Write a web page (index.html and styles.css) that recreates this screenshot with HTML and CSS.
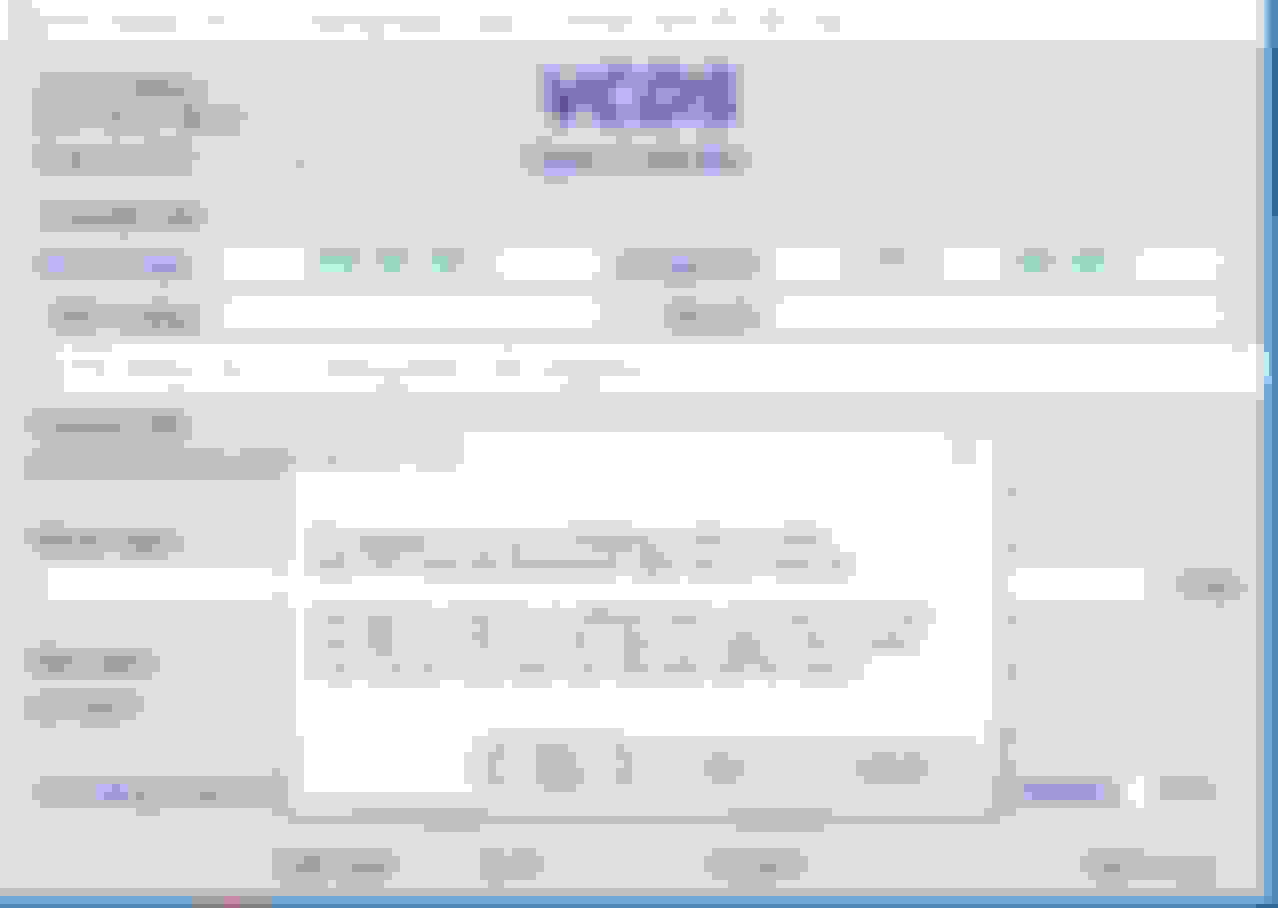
FILE: index.html
```html
<!DOCTYPE html>
<html lang="en">
<head>
<meta charset="utf-8">
<title>Form</title>
<link rel="stylesheet" href="styles.css">
</head>
<body>
<div class="page">
  <div class="workspace">
    <main class="main">
      <svg class="px" width="1256" height="40" viewBox="0 0 157 5">
        <path class="w" d="M0 .5H157M0 1.5H157M0 2.5H157M0 3.5H157M0 4.5H157"/>
        <path class="l" d="M1 .5H4M1 1.5H5M90 1.5H91M96 1.5H97M1 2.5H11M14 2.5H22M26 2.5H28M39 2.5H55M60 2.5H64M71 2.5H79M82 2.5H87M89 2.5H92M95 2.5H98M102 2.5H105M1 3.5H6M15 3.5H22M40 3.5H43M45 3.5H48M50 3.5H55M60 3.5H64M76 3.5H78M83 3.5H84M96 3.5H97M103 3.5H105M1 4.5H6M46 4.5H48"/>
      </svg>

      <section class="head">
        <div class="head-left">
          <svg class="px" width="272" height="104" viewBox="4 9 34 13">
            <path class="g" d="M5 9.5H24M5 10.5H26M4 11.5H26M4 12.5H26M4 13.5H30M4 14.5H31M4 15.5H30M4 16.5H10M13 16.5H20M22 16.5H30M5 17.5H7M14 17.5H15M18 17.5H24M4 18.5H24M4 19.5H25M4 20.5H24M37 20.5H38M5 21.5H24"/>
            <path class="k" d="M17 10.5H21M17 11.5H23M23 13.5H24M14 14.5H15M23 14.5H25M23 15.5H25M9 19.5H10M9 20.5H10"/>
          </svg>
          <svg class="px ml1 mt3" width="168" height="40" viewBox="5 25 21 5">
            <path class="g" d="M5 25.5H25M5 26.5H26M5 27.5H26M5 28.5H25M15 29.5H16"/>
            <path class="k" d="M14 26.5H17M22 26.5H23M9 27.5H17M21 27.5H24"/>
          </svg>
        </div>
        <div class="head-logo">
          <svg class="px" width="232" height="128" viewBox="65 7 29 16">
            <path class="g" d="M75 7.5H79M81 7.5H85M88 7.5H91M67 8.5H68M70 8.5H72M86 8.5H88M92 8.5H93M67 9.5H68M70 9.5H72M92 9.5H93M67 10.5H68M92 10.5H93M67 11.5H68M92 11.5H93M67 12.5H68M92 12.5H93M67 13.5H68M92 13.5H93M68 14.5H69M72 14.5H74M92 14.5H93M68 15.5H70M72 15.5H74M92 15.5H93M69 16.5H71M75 16.5H85M87 16.5H91M67 17.5H69M77 17.5H79M82 17.5H85M87 17.5H91M65 18.5H93M65 19.5H94M65 20.5H94M66 21.5H93M68 22.5H71"/>
            <path class="k" d="M86 9.5H88M69 14.5H70M68 19.5H74M81 19.5H86M87 19.5H88M90 19.5H91M72 20.5H74M81 20.5H86M87 20.5H88M90 20.5H92"/>
            <path class="pl" d="M68 8.5H70M72 8.5H76M79 8.5H81M85 8.5H86M88 8.5H89M91 8.5H92M77 11.5H79M77 12.5H79M71 15.5H72M74 15.5H75M78 15.5H80M84 15.5H88M91 15.5H92M88 18.5H90M68 21.5H72M88 21.5H90"/>
            <path class="pm" d="M76 8.5H79M81 8.5H85M89 8.5H91M68 9.5H70M72 9.5H76M78 9.5H82M85 9.5H86M88 9.5H89M91 9.5H92M68 10.5H69M70 10.5H72M77 10.5H81M91 10.5H92M68 11.5H69M76 11.5H77M79 11.5H81M82 11.5H85M91 11.5H92M68 12.5H69M76 12.5H77M79 12.5H80M82 12.5H84M87 12.5H88M91 12.5H92M68 13.5H69M72 13.5H74M77 13.5H80M86 13.5H88M71 14.5H72M74 14.5H75M77 14.5H80M84 14.5H89M91 14.5H92M70 15.5H71M75 15.5H78M80 15.5H84M88 15.5H91M88 19.5H90M68 20.5H72M88 20.5H90"/>
            <path class="pd" d="M76 9.5H78M82 9.5H85M89 9.5H91M69 10.5H70M72 10.5H77M81 10.5H91M69 11.5H76M81 11.5H82M85 11.5H91M69 12.5H70M71 12.5H76M80 12.5H82M84 12.5H87M88 12.5H91M69 13.5H70M71 13.5H72M74 13.5H77M80 13.5H86M88 13.5H92M70 14.5H71M75 14.5H77M80 14.5H84M89 14.5H91"/>
            <path class="px-dark" d="M70 12.5H71M70 13.5H71"/>
          </svg>
        </div>
      </section>

      <section class="row row-one">
        <svg class="px ml4" width="160" height="40" viewBox="4 31 20 5">
          <path class="g" d="M5 31.5H23M4 32.5H24M4 33.5H24M5 34.5H24M20 35.5H21"/>
          <path class="pl" d="M6 32.5H8M6 33.5H8M18 32.5H22M18 33.5H22"/>
          <path class="pm" d="M19 33.5H22"/>
        </svg>
        <div class="field w10 ml4"></div>
        <svg class="px ml2" width="40" height="24" viewBox="40 31 5 3">
          <path class="g" d="M40 31.5H45M40 32.5H45"/>
          <path class="gn" d="M40 32.5H44M43 33.5H44"/>
          <path class="gl" d="M40 33.5H43"/>
        </svg>
        <svg class="px ml2" width="32" height="24" viewBox="47 31 4 3">
          <path class="g" d="M47 31.5H51M47 32.5H51"/>
          <path class="gn" d="M48 32.5H50M48 33.5H50"/>
        </svg>
        <svg class="px ml3" width="32" height="24" viewBox="54 31 4 3">
          <path class="g" d="M54 31.5H58M54 32.5H58M56 33.5H57"/>
          <path class="gn" d="M54 32.5H56M55 33.5H56"/>
          <path class="gl" d="M54 33.5H55"/>
        </svg>
        <svg class="px ml4" width="104" height="32" viewBox="62 31 13 4">
          <path class="w" d="M63 31.5H74M62 32.5H75M62 33.5H75M63 34.5H74"/>
        </svg>
        <svg class="px ml2" width="144" height="40" viewBox="77 31 18 5">
          <path class="g" d="M78 31.5H94M77 32.5H95M77 33.5H95M77 34.5H94M83 35.5H87"/>
          <path class="pl" d="M84 32.5H86"/>
          <path class="pm" d="M84 33.5H86"/>
          <path class="k" d="M86 33.5H87"/>
        </svg>
        <div class="field w8 ml2"></div>
        <div class="swatch ml5"></div>
        <div class="field w7 ml5"></div>
        <svg class="px ml2" width="40" height="24" viewBox="127 31 5 3">
          <path class="g" d="M128 31.5H131M127 32.5H132M130 33.5H131"/>
          <path class="gn" d="M128 32.5H130M128 33.5H130"/>
        </svg>
        <svg class="px ml2" width="32" height="24" viewBox="134 31 4 3">
          <path class="g" d="M135 31.5H138"/>
          <path class="gn" d="M134 32.5H138M135 33.5H137"/>
          <path class="gl" d="M134 33.5H135M137 33.5H138"/>
        </svg>
        <svg class="px ml4" width="88" height="32" viewBox="142 31 11 4">
          <path class="w" d="M143 31.5H152M142 32.5H153M142 33.5H152M142 34.5H152"/>
        </svg>
      </section>

      <section class="row row-two">
        <svg class="px ml6" width="152" height="40" viewBox="6 37 19 5">
          <path class="g" d="M7 37.5H12M19 37.5H21M6 38.5H25M6 39.5H25M6 40.5H25M7 41.5H12M15 41.5H25"/>
          <path class="k" d="M8 39.5H11M18 39.5H22M19 40.5H20M21 40.5H23"/>
        </svg>
        <svg class="px ml3" width="376" height="32" viewBox="28 37 47 4">
          <path class="w" d="M29 37.5H74M28 38.5H75M28 39.5H75M28 40.5H74"/>
        </svg>
        <svg class="px ml8" width="96" height="40" viewBox="83 37 12 5">
          <path class="g" d="M84 37.5H87M92 37.5H93M83 38.5H94M83 39.5H95M83 40.5H95M84 41.5H93"/>
          <path class="k" d="M85 39.5H87"/>
        </svg>
        <svg class="px ml2" width="448" height="32" viewBox="97 37 56 4">
          <path class="w" d="M98 37.5H152M97 38.5H152M97 39.5H153M97 40.5H152"/>
        </svg>
      </section>

      <section class="banner">
        <svg class="px" width="1200" height="48" viewBox="7 43 150 6">
          <path class="w" d="M8 43.5H9M14 43.5H63M64 43.5H154M156 43.5H157M7 44.5H157M8 45.5H9M13 45.5H16M22 45.5H28M29 45.5H41M46 45.5H51M57 45.5H62M65 45.5H69M78 45.5H157M8 46.5H12M13 46.5H16M24 46.5H28M30 46.5H41M57 46.5H62M65 46.5H68M80 46.5H157M8 47.5H48M50 47.5H71M75 47.5H157M8 48.5H21M23 48.5H47M51 48.5H70M75 48.5H157"/>
        </svg>
      </section>

      <section class="mid">
        <div class="lcol">
          <svg class="px ml3" width="312" height="72" viewBox="3 51 39 9">
            <path class="g" d="M4 51.5H23M3 52.5H24M3 53.5H24M4 54.5H24M5 55.5H23M4 56.5H28M30 56.5H36M3 57.5H37M41 57.5H42M3 58.5H36M3 59.5H35"/>
            <path class="k" d="M19 52.5H22M7 53.5H15M19 53.5H22"/>
          </svg>
          <svg class="px ml3 mt5" width="160" height="40" viewBox="3 65 20 5">
            <path class="g" d="M5 65.5H8M3 66.5H22M3 67.5H23M4 68.5H23M5 69.5H13M15 69.5H21"/>
            <path class="k" d="M5 67.5H9M10 67.5H12M16 67.5H20M17 68.5H19"/>
          </svg>
          <svg class="px ml6" width="264" height="48" viewBox="6 70 33 6">
            <path class="w" d="M36 70.5H38M6 71.5H34M36 71.5H38M6 72.5H39M6 73.5H39M6 74.5H34M36 74.5H38M36 75.5H39"/>
          </svg>
          <svg class="px ml3 mt4" width="136" height="40" viewBox="3 80 17 5">
            <path class="g" d="M5 80.5H7M3 81.5H19M3 82.5H20M3 83.5H20M4 84.5H19"/>
            <path class="k" d="M5 82.5H9M13 82.5H17M6 83.5H8M13 83.5H16"/>
          </svg>
          <svg class="px ml3 mt1" width="120" height="40" viewBox="3 86 15 5">
            <path class="g" d="M5 86.5H17M3 87.5H18M3 88.5H18M3 89.5H17M5 90.5H7M10 90.5H15"/>
            <path class="k" d="M11 88.5H14"/>
          </svg>
          <svg class="px ml4 mt5" width="264" height="48" viewBox="4 96 33 6">
            <path class="g" d="M34 96.5H35M5 97.5H36M4 98.5H36M4 99.5H36M5 100.5H36M17 101.5H20M34 101.5H37"/>
            <path class="pl" d="M12 98.5H16M12 99.5H16"/>
            <path class="pm" d="M14 98.5H15M13 99.5H16"/>
            <path class="k" d="M17 99.5H18M25 99.5H27"/>
          </svg>
        </div>

        <div class="rcol">
          <div class="dot"></div>
          <div class="dot mt6"></div>
          <svg class="px ml1 mt2" width="240" height="40" viewBox="126 71 30 5">
            <path class="w" d="M127 71.5H143M126 72.5H143M126 73.5H143M127 74.5H143"/>
            <path class="g" d="M148 71.5H154M147 72.5H155M147 73.5H156M148 74.5H155M152 75.5H153"/>
            <path class="k" d="M151 73.5H153"/>
          </svg>
          <div class="dot mt1"></div>
          <div class="dot dot-tall mt5"></div>
          <svg class="px mt6" width="224" height="96" viewBox="125 91 28 12">
            <path class="g" d="M125 91.5H127M125 92.5H127M125 93.5H126M125 94.5H126M125 95.5H127M125 96.5H127M125 97.5H139M125 98.5H140M125 99.5H140M125 100.5H140M125 101.5H127M145 97.5H151M145 98.5H152M145 99.5H152"/>
            <path class="pm" d="M128 98.5H138M128 99.5H138"/>
            <path class="pl" d="M137 98.5H138M137 99.5H138M128 99.5H129"/>
            <path class="w" d="M142 97.5H143M141 98.5H143M141 99.5H143M142 100.5H143"/>
          </svg>
        </div>

        <div class="modal">
          <svg class="px" width="720" height="40" viewBox="35 54 90 5">
            <path class="w" d="M58 54.5H118M58 55.5H119M122 55.5H124M58 56.5H119M122 56.5H124M58 57.5H119M122 57.5H124M50 58.5H52M57 58.5H124"/>
          </svg>
          <div class="modal-body">
            <svg class="px ml1" width="560" height="64" viewBox="38 65 70 8">
              <path class="l" d="M39 65.5H42M71 65.5H79M87 65.5H90M98 65.5H102M38 66.5H104M38 67.5H104M38 68.5H105M38 69.5H107M38 70.5H107M38 71.5H107M40 72.5H44M53 72.5H77M79 72.5H85M86 72.5H94M97 72.5H106"/>
              <path class="g" d="M45 67.5H53M72 67.5H81M87 67.5H90M98 67.5H102M45 68.5H53M64 68.5H65M74 68.5H79M80 68.5H82M42 69.5H43M46 69.5H50M60 69.5H61M64 69.5H65M76 69.5H77M80 69.5H83M40 70.5H43M47 70.5H49M53 70.5H57M59 70.5H62M64 70.5H77M80 70.5H84M87 70.5H89M97 70.5H101M104 70.5H105M81 71.5H82"/>
            </svg>
            <svg class="px ml1 mt2" width="640" height="88" viewBox="38 75 80 11">
              <path class="l" d="M39 75.5H54M56 75.5H66M69 75.5H70M72 75.5H89M91 75.5H116M38 76.5H117M38 77.5H117M38 78.5H116M38 79.5H116M38 80.5H115M38 81.5H115M38 82.5H109M38 83.5H108M38 84.5H108M41 85.5H44M46 85.5H55M58 85.5H63M64 85.5H69M71 85.5H75M77 85.5H88M89 85.5H93M96 85.5H97M100 85.5H106"/>
              <path class="g" d="M74 76.5H76M41 77.5H43M46 77.5H49M59 77.5H61M73 77.5H80M84 77.5H87M99 77.5H101M113 77.5H114M46 78.5H49M60 78.5H61M78 78.5H79M46 79.5H49M59 79.5H61M72 79.5H73M78 79.5H80M92 79.5H94M101 79.5H102M111 79.5H112M41 80.5H43M46 80.5H49M60 80.5H61M72 80.5H73M78 80.5H81M91 80.5H95M101 80.5H103M109 80.5H113M47 81.5H49M78 81.5H80M91 81.5H95M78 82.5H80M85 82.5H86M91 82.5H96M42 83.5H43M49 83.5H50M53 83.5H54M65 83.5H68M73 83.5H74M78 83.5H81M83 83.5H87M90 83.5H93M95 83.5H97M101 83.5H104"/>
            </svg>
          </div>
          <svg class="px" width="720" height="112" viewBox="35 90 90 14">
            <path class="w" d="M37 90.5H123M37 91.5H123M38 92.5H123M38 93.5H59M38 94.5H58M38 95.5H58M38 96.5H58M38 97.5H58M38 98.5H59"/>
            <path class="l" d="M61 91.5H78M59 92.5H122"/>
            <path class="g" d="M62 93.5H63M67 93.5H71M77 93.5H78M61 94.5H63M67 94.5H72M77 94.5H79M89 94.5H91M109 94.5H112M113 94.5H115M61 95.5H62M67 95.5H72M78 95.5H79M88 95.5H93M107 95.5H116M61 96.5H62M67 96.5H73M77 96.5H79M88 96.5H93M107 96.5H116M61 97.5H63M67 97.5H73M77 97.5H79M89 97.5H92M108 97.5H115M68 98.5H72M35 97.5H36M35 98.5H36M35 99.5H36M35 100.5H36M124 97.5H125M124 98.5H125M124 99.5H125M124 100.5H125M35 101.5H37M44 101.5H61M91 101.5H104M123 101.5H125M36 102.5H125M53 103.5H60M92 103.5H103"/>
          </svg>
        </div>
      </section>

      <section class="foot">
        <svg class="px ml8-3" width="128" height="40" viewBox="34 106 16 5">
          <path class="g" d="M34 106.5H49M34 107.5H50M34 108.5H50M34 109.5H49M35 110.5H41M42 110.5H48"/>
          <path class="k" d="M38 107.5H40M37 108.5H40M44 108.5H48"/>
        </svg>
        <svg class="px ml10" width="64" height="40" viewBox="60 106 8 5">
          <path class="g" d="M60 106.5H63M64 106.5H67M60 107.5H68M60 108.5H68M60 109.5H67M61 110.5H63"/>
        </svg>
        <svg class="px ml20" width="112" height="40" viewBox="88 106 14 5">
          <path class="g" d="M89 106.5H100M88 107.5H101M88 108.5H101M89 109.5H100M91 110.5H97"/>
          <path class="k" d="M95 108.5H97"/>
        </svg>
        <svg class="px ml33" width="136" height="40" viewBox="135 106 17 5">
          <path class="g" d="M136 106.5H143M135 107.5H152M135 108.5H152M136 109.5H152M137 110.5H141M147 110.5H152"/>
          <path class="k" d="M138 108.5H140"/>
        </svg>
      </section>
    </main>

    <svg class="edge" width="22" height="888" viewBox="157 0 2.75 111" preserveAspectRatio="none">
      <defs>
        <linearGradient id="sheen">
          <stop offset="0" stop-color="#a8d8f8"/>
          <stop offset="1" stop-color="#5088b8"/>
        </linearGradient>
      </defs>
      <rect class="f-g" x="157" y="6" width="1" height="37"/>
      <rect class="f-g" x="157" y="50" width="1" height="61"/>
      <rect class="f-blue" x="158" y="6" width="1" height="105"/>
      <rect fill="url(#sheen)" x="158" y="0" width="1" height="6"/>
      <rect class="f-blue" x="158" y="43" width="1" height="1"/>
      <rect fill="#b8f0f4" x="158" y="44" width=".6" height="3"/>
      <rect fill="#98c8f8" x="158" y="47" width="1" height="1"/>
      <rect class="f-mid" x="159" y="0" width=".75" height="6"/>
      <rect class="f-deep" x="159" y="6" width=".75" height="21"/>
      <rect class="f-mid" x="159" y="27" width=".75" height="84"/>
    </svg>
  </div>

  <svg class="status" width="1278" height="20" viewBox="0 111 159.75 2.5" preserveAspectRatio="none">
    <rect class="f-g" x="0" y="111" width="158" height="1"/>
    <rect class="f-blue" x="158" y="111" width="1" height="1"/>
    <rect class="f-mid" x="159" y="111" width=".75" height="1"/>
    <rect class="f-blue" x="0" y="112" width="158" height="1"/>
    <rect fill="#6098c8" x="158" y="112" width="1" height="1"/>
    <rect class="f-mid" x="159" y="112" width=".75" height="1"/>
    <rect class="f-mid" x="0" y="113" width="157" height=".5"/>
    <rect class="f-deep" x="157" y="113" width="2.75" height=".5"/>
    <rect fill="#a0a0a0" x="24" y="112" width="10" height="1"/>
    <rect fill="#c888a8" x="28" y="112" width="2" height="1"/>
    <rect fill="#808080" x="24" y="113" width="10" height=".5"/>
    <rect fill="#a86888" x="28" y="113" width="2" height=".5"/>
  </svg>
</div>
</body>
</html>
```

FILE: styles.css
```css
html, body {
  margin: 0;
  padding: 0;
  background: #e0e0e0;
  font-family: "Liberation Sans", Arial, sans-serif;
}

.page {
  width: 1278px;
  height: 908px;
  overflow: hidden;
  display: flex;
  flex-direction: column;
}

.workspace {
  display: flex;
  height: 888px;
}

.main {
  width: 1256px;
  flex: none;
  display: flex;
  flex-direction: column;
}

svg {
  display: block;
  flex: none;
  overflow: visible;
}

.px {
  shape-rendering: crispEdges;
}

.px path {
  fill: none;
  stroke-width: 1;
}

.w { stroke: #ffffff; }
.l { stroke: #e0e0e0; }
.g { stroke: #c0c0c0; }
.k { stroke: #a0a0a0; }
.pl { stroke: #c0b4f8; }
.pm { stroke: #a098d8; }
.pd { stroke: #8074b8; }
.px-dark { stroke: #605098; }
.gn { stroke: #98d8c0; }
.gl { stroke: #b8f8e0; }

.f-g { fill: #c0c0c0; }
.f-blue { fill: #70a8d8; }
.f-mid { fill: #5088b8; }
.f-deep { fill: #306898; }

.edge,
.status {
  shape-rendering: crispEdges;
}

.head {
  display: flex;
  height: 200px;
}

.head-left {
  width: 272px;
  margin-left: 32px;
  padding-top: 32px;
}

.head-logo {
  margin-left: 216px;
  padding-top: 16px;
}

.row {
  display: flex;
  align-items: flex-start;
  box-sizing: border-box;
}

.row-one {
  height: 56px;
  padding-top: 8px;
}

.row-two {
  height: 48px;
}

.field {
  height: 32px;
  background: #fff;
  flex: none;
}

.w7 { width: 56px; }
.w8 { width: 64px; }
.w10 { width: 80px; }

.swatch {
  width: 24px;
  height: 16px;
  background: #c0c0c0;
  flex: none;
}

.banner {
  height: 48px;
  margin-left: 56px;
}

.mid {
  position: relative;
  display: flex;
  height: 448px;
}

.lcol {
  width: 1000px;
  flex: none;
  padding-top: 16px;
}

.rcol {
  width: 256px;
  flex: none;
  padding-top: 96px;
}

.dot {
  width: 8px;
  height: 8px;
  margin-left: 8px;
  background: #c0c0c0;
}

.dot-tall { height: 16px; }

.modal {
  position: absolute;
  left: 280px;
  top: 40px;
  width: 720px;
}

.modal-body {
  width: 696px;
  height: 248px;
  margin-left: 16px;
  padding-top: 48px;
  box-sizing: border-box;
  background: #fff;
}

.foot {
  display: flex;
  align-items: flex-start;
  height: 48px;
  padding-top: 8px;
  box-sizing: border-box;
}

.ml1 { margin-left: 8px; }
.ml2 { margin-left: 16px; }
.ml3 { margin-left: 24px; }
.ml4 { margin-left: 32px; }
.ml5 { margin-left: 40px; }
.ml6 { margin-left: 48px; }
.ml8 { margin-left: 64px; }
.ml10 { margin-left: 80px; }
.ml8-3 { margin-left: 272px; }
.ml20 { margin-left: 160px; }
.ml33 { margin-left: 264px; }

.mt1 { margin-top: 8px; }
.mt2 { margin-top: 16px; }
.mt3 { margin-top: 24px; }
.mt4 { margin-top: 32px; }
.mt5 { margin-top: 40px; }
.mt6 { margin-top: 48px; }
```
